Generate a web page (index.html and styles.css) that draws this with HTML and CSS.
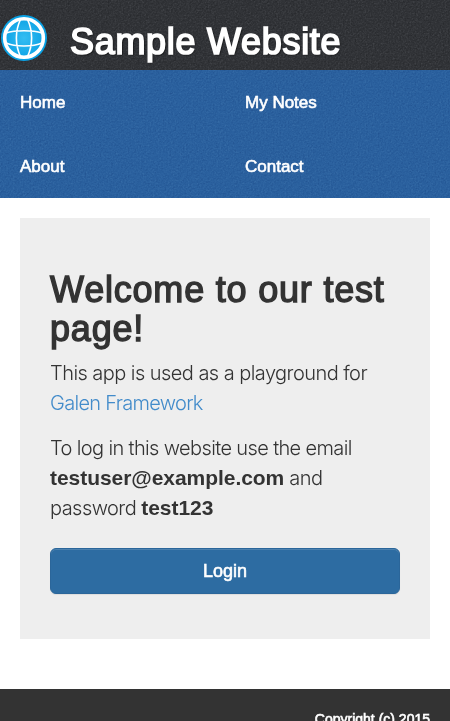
FILE: index.html
```
<!DOCTYPE html>
<html lang="en">
<head>
<meta charset="utf-8">
<title>Sample Website</title>
<link rel="stylesheet" href="styles.css">
</head>
<body>
<header class="header">
  <svg class="texture" aria-hidden="true">
    <filter id="grain" x="0" y="0" width="100%" height="100%" color-interpolation-filters="sRGB">
      <feTurbulence type="fractalNoise" baseFrequency="0.6" numOctaves="2"/>
      <feColorMatrix values="0.8 0.8 0.8 0 -0.7 0.8 0.8 0.8 0 -0.7 0.8 0.8 0.8 0 -0.7 0 0 0 0 1"/>
    </filter>
    <rect width="100%" height="100%" filter="url(#grain)"/>
  </svg>
  <svg class="logo" viewBox="0 0 46 46" aria-hidden="true">
    <defs><radialGradient id="globe"><stop offset="0" stop-color="#35bdf2"/><stop offset="1" stop-color="#08a0e4"/></radialGradient></defs>
    <circle cx="23" cy="23" r="23" fill="url(#globe)"/>
    <g fill="none" stroke="#fff">
      <circle cx="23" cy="23" r="19.3" stroke-width="3.6"/>
      <path stroke-width="1.6" d="M19.500 4.500C14 16 14 30 19.500 41.500M26.500 4.500C32 16 32 30 26.500 41.500M5 18C14 15 32 15 41 18M5 28C14 32 32 32 41 28"/>
    </g>
  </svg>
  <h1 class="site-name">Sample Website</h1>
</header>
<nav class="menu">
  <svg class="texture" aria-hidden="true"><rect width="100%" height="100%" filter="url(#grain)"/></svg>
  <a class="menu-item" href="#">Home</a>
  <a class="menu-item" href="#">My Notes</a>
  <a class="menu-item" href="#">About</a>
  <a class="menu-item" href="#">Contact</a>
</nav>
<main class="welcome">
  <h2 class="title">Welcome to our test page!</h2>
  <p class="text"><span class="line">This app is used as a playground for</span> <a class="link" href="#">Galen Framework</a></p>
  <p class="text"><span class="line line-login">To log in this website use the email</span> <b>testuser@example.com</b> and password <b>test123</b></p>
  <button class="login" type="button">Login</button>
</main>
<footer class="footer">Copyright (c) 2015</footer>
</body>
</html>
```

FILE: styles.css
```
* { box-sizing: border-box; }
html { height: 100%; overflow: hidden; }
body {
  height: 721px;
  margin: 0;
  overflow: hidden;
  background: #fff;
  color: #333;
  font-family: "Liberation Sans", Arial, sans-serif;
}
.header {
  position: relative;
  display: flex;
  height: 70px;
  padding: 15px 0 0 1px;
  background: #313337;
}
.texture {
  position: absolute;
  inset: 0;
  width: 100%;
  height: 100%;
  opacity: .25;
  mix-blend-mode: soft-light;
  pointer-events: none;
}
.logo { position: relative; width: 46px; height: 46px; flex: none; }
.site-name {
  position: relative;
  margin: 7px 0 0 23px;
  color: #fff;
  font-size: 36px;
  font-weight: 400;
  line-height: 40px;
  letter-spacing: .7px;
  -webkit-text-stroke: 1.7px #fff;
  text-shadow: 1px 1px 2px #000;
  white-space: nowrap;
}
.menu {
  position: relative;
  display: grid;
  grid-template-columns: 1fr 1fr;
  height: 128px;
  background: #2a609e;
}
.menu .texture { opacity: .18; }
.menu-item {
  position: relative;
  padding: 1px 0 0 20px;
  color: #fff;
  font-size: 17px;
  line-height: 63px;
  height: 64px;
  text-decoration: none;
  -webkit-text-stroke: .6px #fff;
}
.welcome {
  height: 421px;
  margin: 20px 20px 50px;
  padding: 52px 30px 0;
  background: #eee;
}
.title {
  margin: 0 0 10px;
  font-size: 36px;
  font-weight: 400;
  line-height: 39px;
  letter-spacing: .8px;
  -webkit-text-stroke: 1.4px #333;
}
.text {
  margin: 0 0 15px;
  font: 300 20px/30px Inter, sans-serif;
  letter-spacing: -.55px;
}
.text b { font: 700 21px/24px "Liberation Sans", Arial, sans-serif; letter-spacing: -.05px; }
.line { white-space: nowrap; }
.line-login { letter-spacing: -.63px; }
.link { color: #428bca; letter-spacing: -.7px; text-decoration: none; }
.login {
  display: block;
  width: 100%;
  height: 46px;
  margin-top: 25px;
  padding: 0;
  border: 1px solid #2b669a;
  border-radius: 6px;
  background: #2d6ca2;
  box-shadow: inset 0 1px 0 rgba(255,255,255,.15), 0 1px 1px rgba(0,0,0,.075);
  color: #fff;
  font: 18px/24px "Liberation Sans", Arial, sans-serif;
  -webkit-text-stroke: .6px #fff;
}
.footer {
  height: 32px;
  padding: 20px 20px 0;
  background: #333;
  color: #fff;
  font-size: 14px;
  line-height: 20px;
  text-align: right;
  -webkit-text-stroke: .6px #fff;
}
```
